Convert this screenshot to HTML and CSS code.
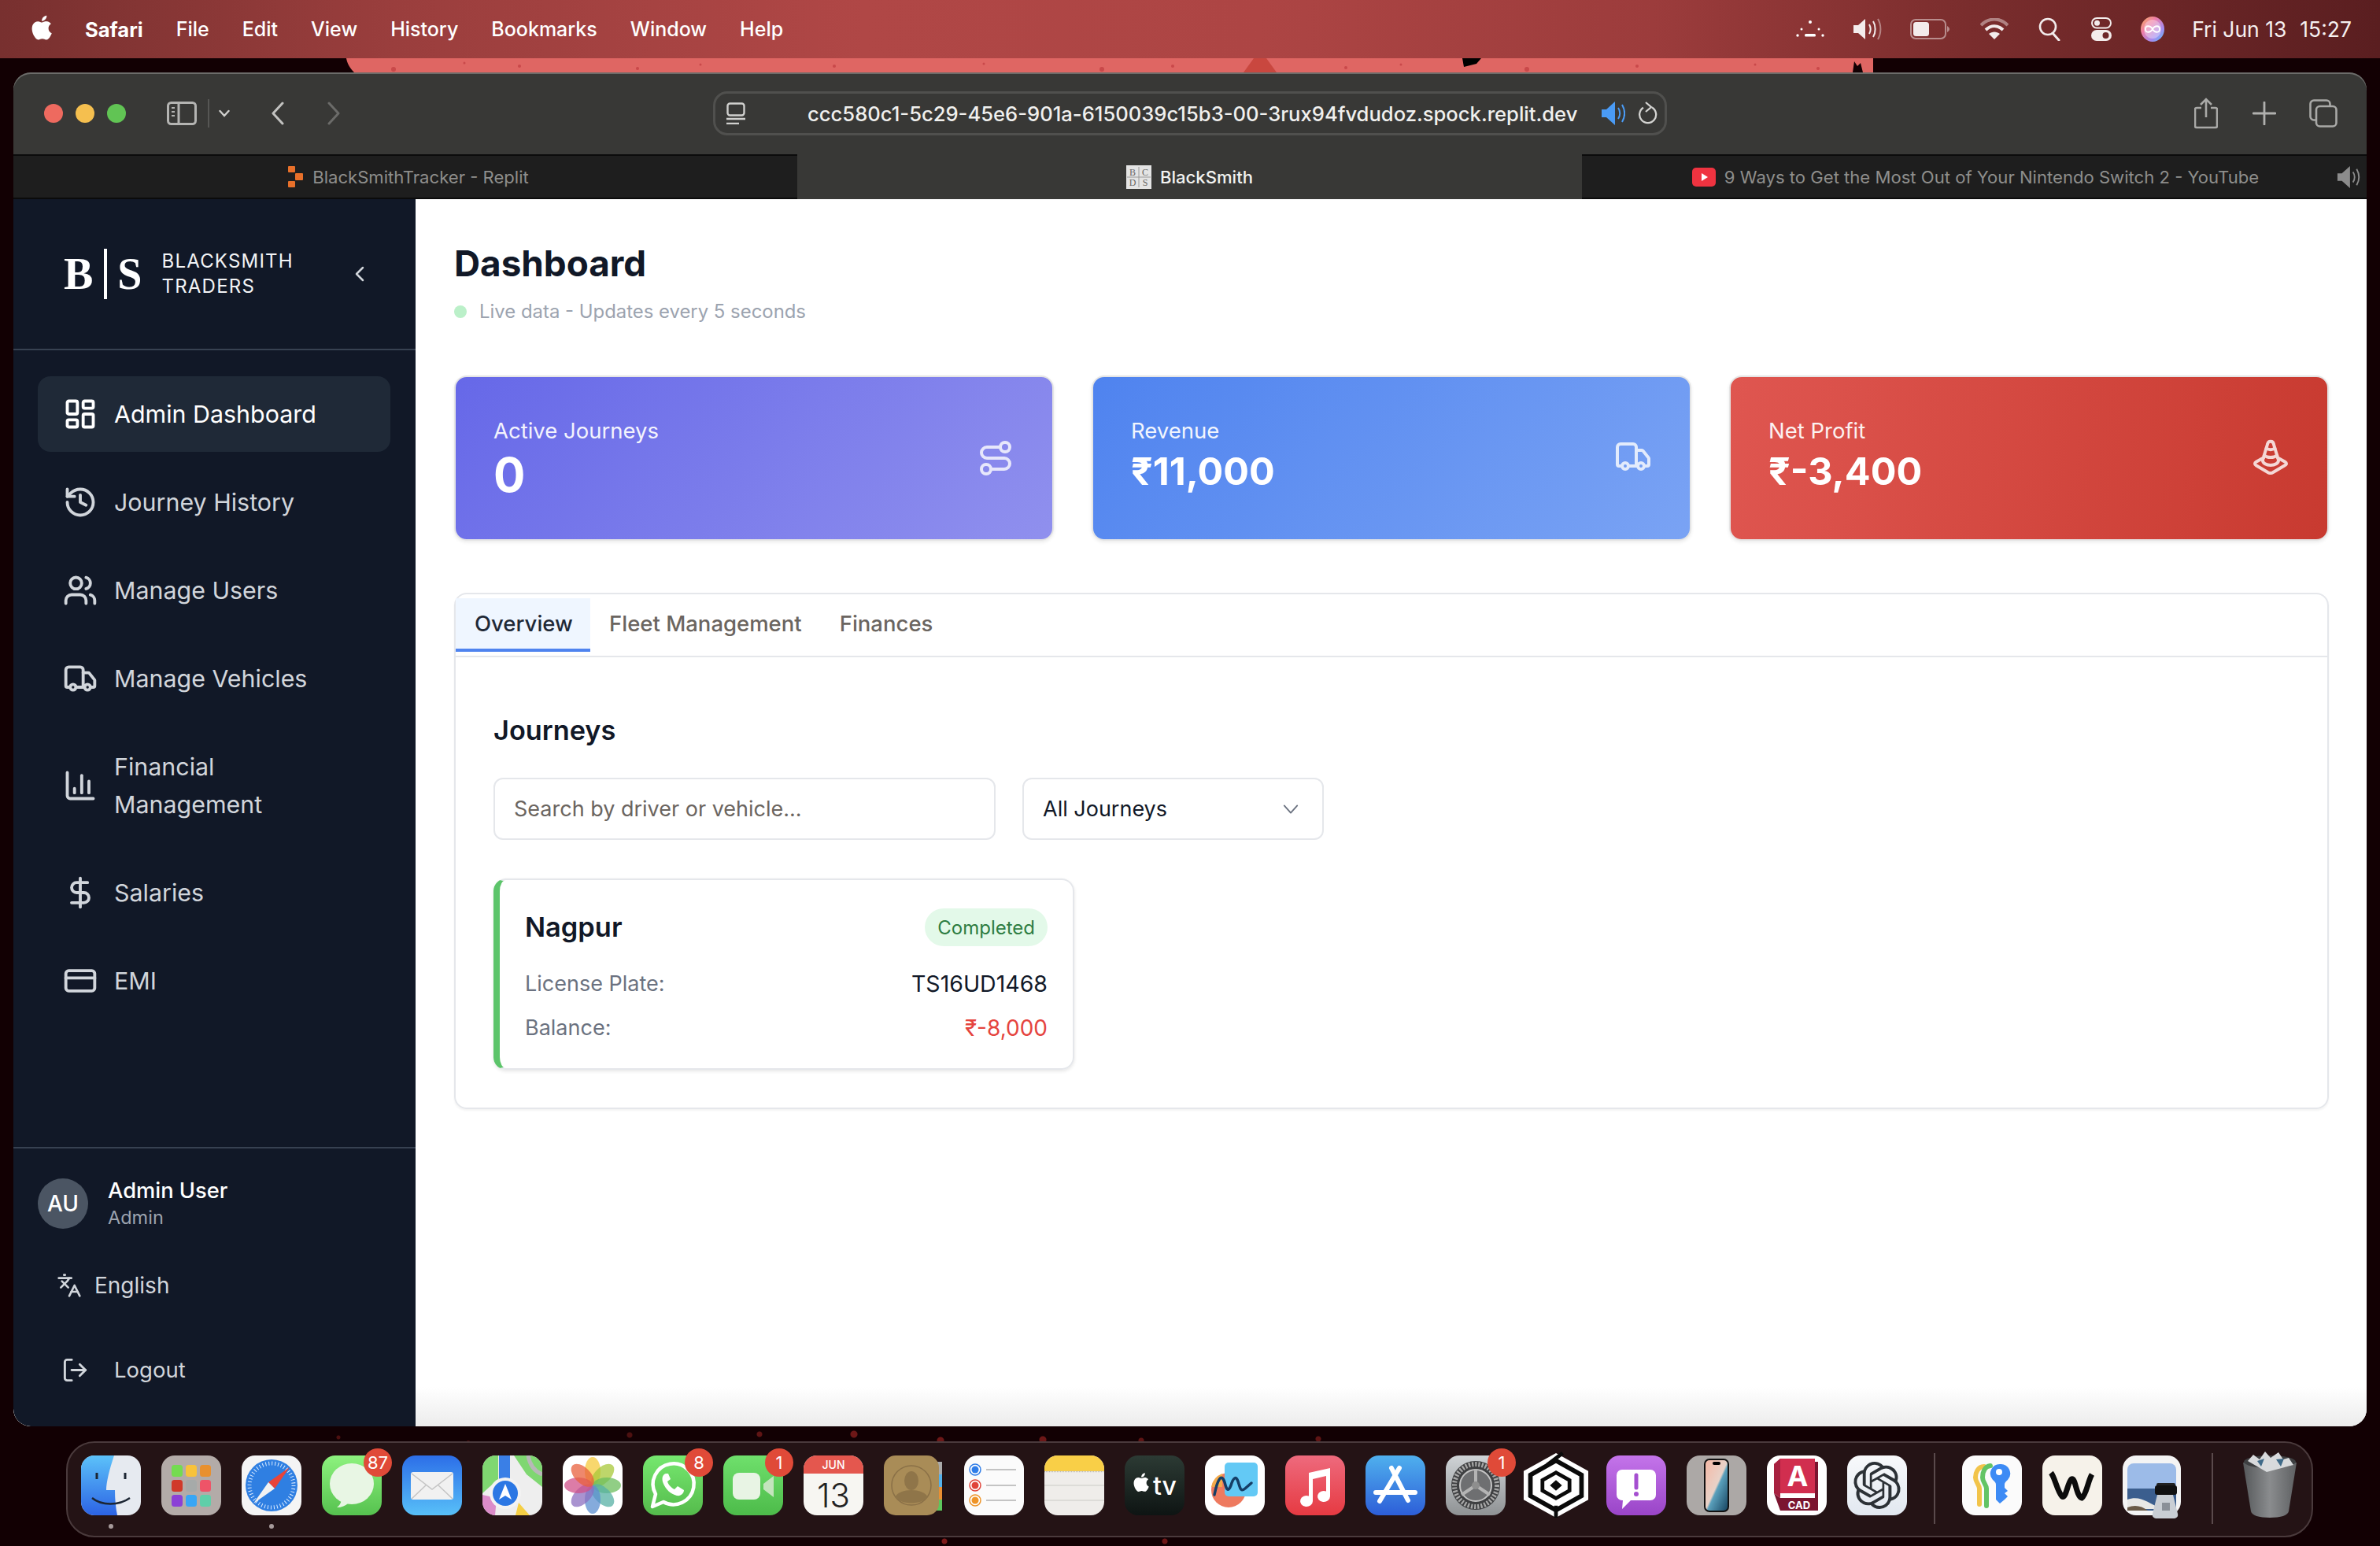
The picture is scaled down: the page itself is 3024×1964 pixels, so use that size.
FILE: index.html
```html
<!DOCTYPE html>
<html lang="en">
<head>
<meta charset="utf-8">
<title>BlackSmith</title>
<link rel="stylesheet" href="styles.css">
</head>
<body>
<div class="desktop">
  <svg class="band" viewBox="0 0 1960 18"><path d="M0 0h1940v18h-1930C4 12 1 6 0 0z" fill="#df6663"/><path d="M1140 18l13-18h16l13 18z" fill="#c9473f"/><path d="M1418 0h24l-6 7-16 4z" fill="#000"/><path d="M1914 18l2-14 4 6 4-4 3 12z" fill="#120003"/><g fill="#c9494a"><circle cx="60" cy="14" r="3"/><circle cx="150" cy="6" r="1.500"/><circle cx="220" cy="10" r="2"/><circle cx="370" cy="13" r="2"/><circle cx="450" cy="8" r="1.500"/><circle cx="620" cy="10" r="2"/><circle cx="810" cy="7" r="1.500"/><circle cx="960" cy="14" r="3"/><circle cx="1050" cy="10" r="2"/><circle cx="1270" cy="12" r="2"/><circle cx="1340" cy="8" r="1.500"/><circle cx="1500" cy="14" r="3"/><circle cx="1640" cy="10" r="2"/><circle cx="1790" cy="8" r="1.500"/><circle cx="1870" cy="13" r="2"/></g></svg>

  <header class="menubar">
    <svg class="apple" viewBox="0 0 24 24"><path d="M17.05 12.04c-.03-2.6 2.12-3.85 2.22-3.91-1.21-1.77-3.09-2.01-3.76-2.04-1.6-.16-3.12.94-3.93.94-.81 0-2.06-.92-3.39-.9-1.74.03-3.35 1.01-4.25 2.57-1.81 3.14-.46 7.8 1.3 10.35.86 1.25 1.89 2.65 3.24 2.6 1.3-.05 1.79-.84 3.36-.84 1.57 0 2.01.84 3.39.81 1.4-.02 2.28-1.27 3.14-2.53.99-1.45 1.4-2.85 1.42-2.93-.03-.01-2.72-1.04-2.74-4.12zM14.46 4.4c.72-.87 1.2-2.08 1.07-3.29-1.03.04-2.28.69-3.02 1.55-.66.77-1.24 2-1.09 3.18 1.15.09 2.32-.58 3.04-1.44z"/></svg>
    <nav class="menu">
      <span class="menu-app">Safari</span><span>File</span><span>Edit</span><span>View</span><span>History</span><span>Bookmarks</span><span>Window</span><span>Help</span>
    </nav>
    <div class="status">
      <svg class="st-dots" viewBox="0 0 36 24"><g fill="#fff"><circle cx="18" cy="3" r="2"/><circle cx="7" cy="12" r="1.500"/><circle cx="29" cy="12" r="1.500"/><circle cx="2" cy="20" r="1.700"/><circle cx="34" cy="20" r="1.700"/><rect x="11" y="18" width="14" height="3.400" rx="1.500"/></g></svg>
      <svg class="st-vol" viewBox="0 0 38 30"><path d="M1 10h6l9-8v26l-9-8H1z" fill="#f3ecec"/><path d="M21 9c2 3.500 2 8.500 0 12M26 5c3.500 5.500 3.500 14.500 0 20" fill="none" stroke="#f3ecec" stroke-width="2"/><path d="M32 2c4.500 7.500 4.500 18.500 0 26" fill="none" stroke="#f3ecec" stroke-opacity=".45" stroke-width="2"/></svg>
      <svg class="st-bat" viewBox="0 0 50 28"><rect x="1" y="2" width="44" height="24" rx="6" fill="none" stroke="#f3ecec" stroke-opacity=".5" stroke-width="2"/><rect x="4" y="5" width="20" height="18" rx="3.500" fill="#f3ecec"/><path d="M47 10c2 1 3 3 3 4s-1 3-3 4z" fill="#f3ecec" fill-opacity=".5"/></svg>
      <svg class="st-wifi" viewBox="0 0 36 28"><path d="M1 9c10-10 24-10 34 0" fill="none" stroke="#f3ecec" stroke-opacity=".45" stroke-width="4"/><path d="M7 15c7-6.500 15-6.500 22 0" fill="none" stroke="#f3ecec" stroke-width="4"/><path d="M18 27l-7-7c4-3.500 10-3.500 14 0z" fill="#f3ecec"/></svg>
      <svg class="st-search" viewBox="0 0 28 30"><circle cx="12" cy="12" r="10" fill="none" stroke="#f3ecec" stroke-width="2.600"/><path d="M18 20l8 9" stroke="#f3ecec" stroke-width="3" stroke-linecap="round"/></svg>
      <svg class="st-ctrl" viewBox="0 0 26 30"><rect x="1" y="1" width="24" height="12.500" rx="6.200" fill="none" stroke="#f3ecec" stroke-width="2"/><circle cx="7.500" cy="7.200" r="3.500" fill="#f3ecec"/><rect x="0" y="16" width="26" height="14" rx="7" fill="#f3ecec"/><circle cx="18.500" cy="23" r="4" fill="#6d2729"/></svg>
      <svg class="st-siri" viewBox="0 0 30 32"><defs><linearGradient id="sg" x1="0" y1="0" x2="1" y2="1"><stop offset="0" stop-color="#f4b35c"/><stop offset=".35" stop-color="#ef7da8"/><stop offset=".7" stop-color="#a68bf0"/><stop offset="1" stop-color="#4fc4f5"/></linearGradient></defs><ellipse cx="15" cy="16" rx="15" ry="16" fill="url(#sg)"/><ellipse cx="15" cy="16" rx="11" ry="12" fill="#fff" fill-opacity=".35"/><path d="M15 16c-3-5-9-5-9 0s6 5 9 0c3-5 9-5 9 0s-6 5-9 0z" fill="none" stroke="#fff" stroke-width="1.800"/></svg>
      <span class="clock"><span>Fri Jun 13</span><span>15:27</span></span>
    </div>
  </header>

  <div class="window">
    <div class="toolbar">
      <div class="lights"><i class="light red"></i><i class="light yellow"></i><i class="light green"></i></div>
      <svg class="tb-side" viewBox="0 0 38 30"><rect x="1.500" y="1.500" width="35" height="27" rx="4" fill="none" stroke="#b4b4b2" stroke-width="3"/><path d="M15 2v26" stroke="#b4b4b2" stroke-width="3"/><path d="M6 8h4M6 13h4M6 18h4" stroke="#b4b4b2" stroke-width="2"/></svg>
      <i class="tb-sep"></i>
      <svg class="tb-chev" viewBox="0 0 14 10"><path d="M1.500 2l5.500 6 5.500-6" fill="none" stroke="#cfcfcd" stroke-width="2.400" stroke-linecap="round"/></svg>
      <svg class="tb-back" viewBox="0 0 18 30"><path d="M15 2L3 15l12 13" fill="none" stroke="#c2c2c0" stroke-width="3" stroke-linecap="round" stroke-linejoin="round"/></svg>
      <svg class="tb-fwd" viewBox="0 0 18 30"><path d="M3 2l12 13L3 28" fill="none" stroke="#6b6b69" stroke-width="3" stroke-linecap="round" stroke-linejoin="round"/></svg>
      <div class="urlbar">
        <svg class="url-reader" viewBox="0 0 24 28"><rect x="1.500" y="1.500" width="21" height="15" rx="3" fill="none" stroke="#d0d0ce" stroke-width="2.400"/><path d="M0 21h24" stroke="#d0d0ce" stroke-width="2.400"/><path d="M0 27h16" stroke="#d0d0ce" stroke-width="2.400"/></svg>
        <span class="url-text">ccc580c1-5c29-45e6-901a-6150039c15b3-00-3rux94fvdudoz.spock.replit.dev</span>
        <svg class="url-vol" viewBox="0 0 30 32"><path d="M0 11h6l11-10v30L6 21H0z" fill="#4a9bf5"/><path d="M21 9c3 4 3 10 0 14M26 5c4 7 4 15 0 22" fill="none" stroke="#4a9bf5" stroke-width="2"/></svg>
        <svg class="url-reload" viewBox="0 0 24 30"><path d="M17 7.500A10.500 10.500 0 1 1 6 7.700" fill="none" stroke="#d4d4d2" stroke-width="2.300"/><path d="M9 1l7 6-7 6" fill="none" stroke="#d4d4d2" stroke-width="2.300"/></svg>
      </div>
      <svg class="tb-share" viewBox="0 0 30 40"><path d="M9 13H3a2 2 0 0 0-2 2v21a2 2 0 0 0 2 2h24a2 2 0 0 0 2-2V15a2 2 0 0 0-2-2h-6" fill="none" stroke="#a9a9a7" stroke-width="2.600"/><path d="M15 25V2M8 9l7-7 7 7" fill="none" stroke="#a9a9a7" stroke-width="2.600"/></svg>
      <svg class="tb-plus" viewBox="0 0 30 30"><path d="M15 1v28M1 15h28" stroke="#b0b0ae" stroke-width="2.800" stroke-linecap="round"/></svg>
      <svg class="tb-tabs" viewBox="0 0 36 36"><rect x="1.500" y="1.500" width="25" height="25" rx="4.500" fill="none" stroke="#a9a9a7" stroke-width="2.600"/><rect x="9" y="9" width="25.500" height="25.500" rx="4.500" fill="#383836" stroke="#a9a9a7" stroke-width="2.600"/></svg>
    </div>

    <div class="tabbar">
      <div class="tab tab-first">
        <svg class="fav" viewBox="0 0 20 28"><g fill="#e8702a"><rect x="0" y="0" width="9" height="8" rx="1"/><rect x="9" y="9" width="10" height="9" rx="1"/><rect x="0" y="19" width="9" height="8" rx="1"/></g></svg>
        <span>BlackSmithTracker - Replit</span>
      </div>
      <div class="tab tab-active">
        <svg class="fav-bs" viewBox="0 0 32 30"><rect width="32" height="30" fill="#e4e4e4"/><path d="M16 2v26M1 15h30" stroke="#9a9a9a" stroke-width="1"/><text x="8" y="13" class="fav-txt">B</text><text x="24" y="13" class="fav-txt">C</text><text x="8" y="26" class="fav-txt">D</text><text x="24" y="26" class="fav-txt">S</text></svg>
        <span>BlackSmith</span>
      </div>
      <div class="tab tab-last">
        <svg class="fav-yt" viewBox="0 0 30 24"><rect width="30" height="24" rx="5" fill="#ef3340"/><path d="M12 7l8 5-8 5z" fill="#fff"/></svg>
        <span>9 Ways to Get the Most Out of Your Nintendo Switch 2 - YouTube</span>
        <svg class="tab-vol" viewBox="0 0 30 32"><path d="M0 11h6l11-10v30L6 21H0z" fill="#8c8c8c"/><path d="M21 9c3 4 3 10 0 14M26 5c4 7 4 15 0 22" fill="none" stroke="#8c8c8c" stroke-width="2"/></svg>
      </div>
    </div>

    <div class="page">
      <aside class="sidebar">
        <div class="brand">
          <div class="brand-mark"><span>B</span><i></i><span>S</span></div>
          <div class="brand-name">BLACKSMITH<br>TRADERS</div>
          <svg class="brand-chev" viewBox="0 0 24 24"><path d="M15 4l-8 8 8 8"/></svg>
        </div>
        <nav class="nav">
          <a class="nav-item active"><svg class="ico" viewBox="0 0 24 24"><rect x="3" y="3" width="7" height="9" rx="1"/><rect x="14" y="3" width="7" height="5" rx="1"/><rect x="14" y="12" width="7" height="9" rx="1"/><rect x="3" y="16" width="7" height="5" rx="1"/></svg><span>Admin Dashboard</span></a>
          <a class="nav-item"><svg class="ico" viewBox="0 0 24 24"><path d="M3 12a9 9 0 1 0 9-9 9.750 9.750 0 0 0-6.740 2.740L3 8"/><path d="M3 3v5h5"/><path d="M12 7v5l4 2"/></svg><span>Journey History</span></a>
          <a class="nav-item"><svg class="ico" viewBox="0 0 24 24"><path d="M16 21v-2a4 4 0 0 0-4-4H6a4 4 0 0 0-4 4v2"/><circle cx="9" cy="7" r="4"/><path d="M22 21v-2a4 4 0 0 0-3-3.870"/><path d="M16 3.130a4 4 0 0 1 0 7.750"/></svg><span>Manage Users</span></a>
          <a class="nav-item"><svg class="ico" viewBox="0 0 24 24"><path d="M14 18V6a2 2 0 0 0-2-2H4a2 2 0 0 0-2 2v11a1 1 0 0 0 1 1h2"/><path d="M15 18H9"/><path d="M19 18h2a1 1 0 0 0 1-1v-3.650a1 1 0 0 0-.220-.624l-3.480-4.350A1 1 0 0 0 17.520 8H14"/><circle cx="17" cy="18" r="2"/><circle cx="7" cy="18" r="2"/></svg><span>Manage Vehicles</span></a>
          <a class="nav-item"><svg class="ico" viewBox="0 0 24 24"><path d="M3 3v16a2 2 0 0 0 2 2h16"/><path d="M18 17V9"/><path d="M13 17V5"/><path d="M8 17v-3"/></svg><span>Financial<br>Management</span></a>
          <a class="nav-item"><svg class="ico" viewBox="0 0 24 24"><path d="M12 2v20"/><path d="M17 5H9.500a3.500 3.500 0 0 0 0 7h5a3.500 3.500 0 0 1 0 7H6"/></svg><span>Salaries</span></a>
          <a class="nav-item"><svg class="ico" viewBox="0 0 24 24"><rect x="2" y="5" width="20" height="14" rx="2"/><path d="M2 10h20"/></svg><span>EMI</span></a>
        </nav>
        <div class="side-foot">
          <div class="user">
            <div class="avatar">AU</div>
            <div class="user-text"><div class="user-name">Admin User</div><div class="user-role">Admin</div></div>
          </div>
          <div class="lang"><svg class="ico-lang" viewBox="0 0 24 24"><path d="m5 8 6 6"/><path d="m4 14 6-6 2-3"/><path d="M2 5h12"/><path d="M7 2h1"/><path d="m22 22-5-10-5 10"/><path d="M14 18h6"/></svg><span>English</span></div>
          <div class="logout"><svg class="ico-out" viewBox="0 0 24 24"><path d="M9 21H5a2 2 0 0 1-2-2V5a2 2 0 0 1 2-2h4"/><path d="m16 17 5-5-5-5"/><path d="M21 12H9"/></svg><span>Logout</span></div>
        </div>
      </aside>

      <main class="main">
        <h1 class="title">Dashboard</h1>
        <div class="live"><i class="live-dot"></i><span>Live data - Updates every 5 seconds</span></div>

        <section class="stats">
          <article class="stat stat-purple">
            <div><div class="stat-label">Active Journeys</div><div class="stat-value stat-value-big">0</div></div>
            <svg class="stat-ico" viewBox="0 0 24 24"><circle cx="6" cy="19" r="3"/><path d="M9 19h8.500a3.500 3.500 0 0 0 0-7h-11a3.500 3.500 0 0 1 0-7H15"/><circle cx="18" cy="5" r="3"/></svg>
          </article>
          <article class="stat stat-blue">
            <div><div class="stat-label">Revenue</div><div class="stat-value">₹11,000</div></div>
            <svg class="stat-ico" viewBox="0 0 24 24"><path d="M14 18V6a2 2 0 0 0-2-2H4a2 2 0 0 0-2 2v11a1 1 0 0 0 1 1h2"/><path d="M15 18H9"/><path d="M19 18h2a1 1 0 0 0 1-1v-3.650a1 1 0 0 0-.220-.624l-3.480-4.350A1 1 0 0 0 17.520 8H14"/><circle cx="17" cy="18" r="2"/><circle cx="7" cy="18" r="2"/></svg>
          </article>
          <article class="stat stat-red">
            <div><div class="stat-label">Net Profit</div><div class="stat-value">₹-3,400</div></div>
            <svg class="stat-ico" viewBox="0 0 24 24"><path d="M9.300 6.200a4.550 4.550 0 0 0 5.400 0"/><path d="M7.900 10.700c.9.800 2.400 1.300 4.100 1.300s3.200-.5 4.100-1.300"/><path d="M13.900 3.500a1.930 1.930 0 0 0-3.800-.1l-3 10c-.1.200-.1.400-.1.600 0 1.700 2.200 3 5 3s5-1.300 5-3c0-.2 0-.4-.1-.5Z"/><path d="m7.500 12.200-4.700 2.700c-.5.300-.8.700-.8 1.100s.3.800.8 1.100l7.600 4.500c.9.500 2.100.5 3 0l7.600-4.500c.7-.3 1-.7 1-1.100s-.3-.8-.8-1.100l-4.700-2.700"/></svg>
          </article>
        </section>

        <section class="panel">
          <div class="tablist">
            <div class="tl-item tl-active">Overview</div>
            <div class="tl-item">Fleet Management</div>
            <div class="tl-item">Finances</div>
          </div>
          <div class="panel-body">
            <h2 class="section-title">Journeys</h2>
            <div class="filters">
              <input class="search" type="text" placeholder="Search by driver or vehicle...">
              <div class="select"><span>All Journeys</span><svg viewBox="0 0 24 24"><path d="M3 7l9 10 9-10"/></svg></div>
            </div>
            <article class="jcard">
              <div class="jcard-head"><h3>Nagpur</h3><span class="badge">Completed</span></div>
              <div class="jrow"><span class="jkey">License Plate:</span><span class="jval">TS16UD1468</span></div>
              <div class="jrow"><span class="jkey">Balance:</span><span class="jval jneg">₹-8,000</span></div>
            </article>
          </div>
        </section>
      </main>
    </div>
  </div>

  <footer class="dock">
    <div class="app run"><svg viewBox="0 0 76 76"><defs><linearGradient id="f1" x1="0" y1="0" x2="0" y2="1"><stop offset="0" stop-color="#5cc2fa"/><stop offset="1" stop-color="#2c63e4"/></linearGradient></defs><rect width="76" height="76" rx="17" fill="#e6eaf0"/><path d="M17 0h25C36 18 32 34 32 44h11c0 12 1 22 3 32H17A17 17 0 0 1 0 59V17A17 17 0 0 1 17 0z" fill="url(#f1)"/><path d="M20 22v8M56 22v8" stroke="#1c2633" stroke-width="3"/><path d="M14 54c12 10 34 10 48 0" fill="none" stroke="#1c2633" stroke-width="2.500"/></svg></div>
    <div class="app"><svg viewBox="0 0 76 76"><rect width="76" height="76" rx="17" fill="#b3aba8"/><g><rect x="13" y="12" width="14" height="15" rx="3.500" fill="#74dc50"/><rect x="31" y="12" width="14" height="15" rx="3.500" fill="#f8c23b"/><rect x="49" y="12" width="14" height="15" rx="3.500" fill="#e8902f"/><rect x="13" y="31" width="14" height="15" rx="3.500" fill="#d0392a"/><rect x="31" y="31" width="14" height="15" rx="3.500" fill="#a6aaa9"/><rect x="49" y="31" width="14" height="15" rx="3.500" fill="#ee5468"/><rect x="13" y="50" width="14" height="15" rx="3.500" fill="#8b40d6"/><rect x="31" y="50" width="14" height="15" rx="3.500" fill="#38a6f5"/><rect x="49" y="50" width="14" height="15" rx="3.500" fill="#5fcfa9"/></g></svg></div>
    <div class="app run"><svg viewBox="0 0 76 76"><rect width="76" height="76" rx="17" fill="#f4f4f4"/><circle cx="38" cy="38" r="33" fill="#2f7fe2"/><circle cx="38" cy="38" r="28" fill="none" stroke="#dcecff" stroke-width="5" stroke-dasharray="1 3"/><path d="M61 15L34 34l8 8z" fill="#e8443a"/><path d="M15 61l19-27 8 8z" fill="#f2f2f2"/></svg></div>
    <div class="app"><svg viewBox="0 0 76 76"><defs><linearGradient id="m1" x1="0" y1="0" x2="0" y2="1"><stop offset="0" stop-color="#8df27e"/><stop offset="1" stop-color="#56c24f"/></linearGradient></defs><rect width="76" height="76" rx="17" fill="url(#m1)"/><ellipse cx="38" cy="36" rx="28" ry="26" fill="#e8f6e4"/><path d="M25 56c-1 5-3 8-6 10 6 0 11-2 15-6z" fill="#e8f6e4"/></svg><b class="badge-dock">87</b></div>
    <div class="app"><svg viewBox="0 0 76 76"><defs><linearGradient id="ma" x1="0" y1="0" x2="0" y2="1"><stop offset="0" stop-color="#2c6ee8"/><stop offset="1" stop-color="#58c0f8"/></linearGradient></defs><rect width="76" height="76" rx="17" fill="url(#ma)"/><rect x="11" y="21" width="54" height="35" rx="3" fill="#f1f1f1"/><path d="M12 23l26 20 26-20M12 55l19-18M64 55L45 37" fill="none" stroke="#c4c4c4" stroke-width="1.500"/></svg></div>
    <div class="app"><svg viewBox="0 0 76 76"><clipPath id="mc"><rect width="76" height="76" rx="17"/></clipPath><g clip-path="url(#mc)"><rect width="76" height="76" fill="#eeeeee"/><path d="M0 0h20v30L0 48z" fill="#7fd771"/><path d="M40 0h36v40L56 24z" fill="#7fd771"/><path d="M0 50l18 4-2 22H0z" fill="#db8cc9"/><path d="M42 76l4-16 14 16z" fill="#f5cf45"/><path d="M17 0h14v40H17z" fill="#3a7fe6" transform="translate(4 0)"/><path d="M58 0c2 12 8 20 18 24" fill="none" stroke="#b8b8b8" stroke-width="5"/><circle cx="29" cy="48" r="20" fill="#f3f3f3"/><circle cx="29" cy="48" r="16" fill="#2b77e4"/><path d="M29 36l8 20-8-5-8 5z" fill="#fff"/></g></svg></div>
    <div class="app"><svg viewBox="0 0 76 76"><rect width="76" height="76" rx="17" fill="#fff"/><g transform="translate(38 38)" fill-opacity=".75"><ellipse cy="-18" rx="10" ry="18" fill="#f5c93c"/><ellipse cy="-18" rx="10" ry="18" fill="#a8c83a" transform="rotate(45)"/><ellipse cy="-18" rx="10" ry="18" fill="#6cbd5c" transform="rotate(90)"/><ellipse cy="-18" rx="10" ry="18" fill="#57b0a4" transform="rotate(135)"/><ellipse cy="-18" rx="10" ry="18" fill="#5c8fd0" transform="rotate(180)"/><ellipse cy="-18" rx="10" ry="18" fill="#8c6fc0" transform="rotate(225)"/><ellipse cy="-18" rx="10" ry="18" fill="#d0508a" transform="rotate(270)"/><ellipse cy="-18" rx="10" ry="18" fill="#e8603c" transform="rotate(315)"/></g></svg></div>
    <div class="app"><svg viewBox="0 0 76 76"><defs><linearGradient id="w1" x1="0" y1="0" x2="0" y2="1"><stop offset="0" stop-color="#76e86f"/><stop offset="1" stop-color="#55bb4c"/></linearGradient></defs><rect width="76" height="76" rx="17" fill="url(#w1)"/><path d="M12 65l4-16a26 26 0 1 1 10 10z" fill="none" stroke="#fff" stroke-width="4.500" stroke-linejoin="round"/><path d="M29 23c-4 1-6 6-3 13 3 7 9 13 17 15 5 1 9-3 9-7l-8-5-4 4c-4-2-8-6-9-10l4-3-3-7z" fill="#fff"/></svg><b class="badge-dock">8</b></div>
    <div class="app"><svg viewBox="0 0 76 76"><defs><linearGradient id="ft" x1="0" y1="0" x2="0" y2="1"><stop offset="0" stop-color="#6fe06c"/><stop offset="1" stop-color="#4dbb4a"/></linearGradient></defs><rect width="76" height="76" rx="17" fill="url(#ft)"/><rect x="12" y="22" width="35" height="34" rx="8" fill="#e8f4e4"/><path d="M51 36l13-10v27L51 43z" fill="#c4e4bd"/></svg><b class="badge-dock">1</b></div>
    <div class="app"><svg viewBox="0 0 76 76"><clipPath id="cc"><rect width="76" height="76" rx="17"/></clipPath><g clip-path="url(#cc)"><rect width="76" height="76" fill="#f7f6f2"/><rect width="76" height="23" fill="#e4574e"/><text x="38" y="17" class="cal-m">JUN</text><text x="38" y="66" class="cal-d">13</text></g></svg></div>
    <div class="app"><svg viewBox="0 0 76 76"><rect x="60" y="8" width="14" height="16" fill="#aaa" /><rect x="60" y="24" width="14" height="16" fill="#54b1ea"/><rect x="60" y="40" width="14" height="16" fill="#ea8f32"/><rect x="60" y="56" width="14" height="14" fill="#5ec65c"/><rect width="70" height="76" rx="15" fill="#a98c57"/><circle cx="35" cy="38" r="25" fill="none" stroke="#8a7047" stroke-width="1.500"/><ellipse cx="35" cy="32" rx="9" ry="12" fill="#8f7549"/><path d="M14 53c6-12 36-12 42 0-10 10-32 10-42 0z" fill="#8f7549"/></svg></div>
    <div class="app"><svg viewBox="0 0 76 76"><rect width="76" height="76" rx="17" fill="#fbfbfb"/><circle cx="14" cy="18" r="7" fill="#fff" stroke="#2f7de8" stroke-width="1.500"/><circle cx="14" cy="18" r="4.500" fill="#2f7de8"/><circle cx="14" cy="38" r="7" fill="#fff" stroke="#e0443a" stroke-width="1.500"/><circle cx="14" cy="38" r="4.500" fill="#e0443a"/><circle cx="14" cy="57" r="7" fill="#fff" stroke="#ee9428" stroke-width="1.500"/><circle cx="14" cy="57" r="4.500" fill="#ee9428"/><path d="M28 18h38M28 38h38M28 57h38" stroke="#c4c4c4" stroke-width="2"/></svg></div>
    <div class="app"><svg viewBox="0 0 76 76"><clipPath id="nc"><rect width="76" height="76" rx="17"/></clipPath><g clip-path="url(#nc)"><rect width="76" height="76" fill="#efedea"/><rect width="76" height="20" fill="#f9cf47"/><path d="M0 20.500h76" stroke="#bbb" stroke-width="1.500" stroke-dasharray="1 1"/><path d="M0 38h76M0 57h76" stroke="#d8d6d2" stroke-width="1.500"/></g></svg></div>
    <div class="app"><svg viewBox="0 0 76 76"><defs><linearGradient id="tv" x1="0" y1="0" x2="0" y2="1"><stop offset="0" stop-color="#2c3a34"/><stop offset="1" stop-color="#0e1413"/></linearGradient></defs><rect width="76" height="76" rx="17" fill="url(#tv)"/><g transform="translate(8 21) scale(1.150)"><path fill="#fff" d="M17.050 12.040c-.03-2.600 2.120-3.850 2.220-3.910-1.210-1.770-3.090-2.010-3.760-2.040-1.600-.16-3.120.94-3.930.94-.81 0-2.060-.92-3.390-.9-1.740.03-3.350 1.010-4.250 2.570-1.810 3.140-.46 7.800 1.300 10.350.86 1.250 1.890 2.650 3.240 2.600 1.300-.05 1.790-.84 3.360-.84 1.570 0 2.010.84 3.390.81 1.400-.02 2.280-1.270 3.140-2.530.99-1.450 1.400-2.850 1.420-2.930-.03-.01-2.720-1.040-2.740-4.120zM14.460 4.400c.72-.87 1.200-2.080 1.070-3.290-1.030.04-2.280.69-3.020 1.550-.66.77-1.240 2-1.090 3.180 1.150.09 2.320-.58 3.040-1.440z"/></g><text x="51" y="50" class="tv-t">tv</text></svg></div>
    <div class="app"><svg viewBox="0 0 76 76"><rect width="76" height="76" rx="17" fill="#fff"/><circle cx="30" cy="44" r="22" fill="#ee7a5f"/><path d="M8 40a22 22 0 0 1 14-17v17z" fill="#f3a94a"/><rect x="25" y="9" width="42" height="43" rx="5" fill="#63c9f5"/><path d="M12 50c4-20 9-28 13-16 2 8 4 14 8 4 3-10 7-14 10-2 2 7 3 10 8 6l8-7" fill="none" stroke="#153e66" stroke-width="3.500" stroke-linecap="round"/></svg></div>
    <div class="app"><svg viewBox="0 0 76 76"><defs><linearGradient id="mu" x1="0" y1="0" x2="0" y2="1"><stop offset="0" stop-color="#ee6a7d"/><stop offset="1" stop-color="#e63a42"/></linearGradient></defs><rect width="76" height="76" rx="17" fill="url(#mu)"/><path d="M30 22l27-6v36a8 7 0 1 1-5-6.500V26l-17 4v28a8 7 0 1 1-5-6.500z" fill="#fff"/></svg></div>
    <div class="app"><svg viewBox="0 0 76 76"><defs><linearGradient id="as" x1="0" y1="0" x2="0" y2="1"><stop offset="0" stop-color="#4fb0ee"/><stop offset="1" stop-color="#2d5ed8"/></linearGradient></defs><rect width="76" height="76" rx="17" fill="url(#as)"/><g stroke="#fff" stroke-width="6" stroke-linecap="round" fill="none"><path d="M33 16l21 41"/><path d="M43 16L18 58"/><path d="M13 47h50"/></g></svg></div>
    <div class="app"><svg viewBox="0 0 76 76"><defs><linearGradient id="ss" x1="0" y1="0" x2="0" y2="1"><stop offset="0" stop-color="#cfd3d6"/><stop offset="1" stop-color="#8f9294"/></linearGradient></defs><rect width="76" height="76" rx="17" fill="url(#ss)"/><circle cx="38" cy="38" r="31" fill="#3f4042"/><circle cx="38" cy="38" r="27" fill="none" stroke="#a8a8a8" stroke-width="6" stroke-dasharray="2.200 2"/><circle cx="38" cy="38" r="20" fill="#6e6f71" stroke="#c4c4c4" stroke-width="2"/><path d="M38 38V17M38 38L20 50M38 38l18 12" stroke="#b4b4b4" stroke-width="4"/><circle cx="38" cy="38" r="5" fill="#8e8e8e"/></svg><b class="badge-dock">1</b></div>
    <div class="app"><svg viewBox="0 0 92 88" class="app-wide"><path d="M46 1l43 24v38L46 87 3 63V25z" fill="#fff"/><path d="M46 11L12 30v28l34 19 34-19V30z" fill="none" stroke="#0a0a0a" stroke-width="6"/><path d="M46 27L28 37v14l18 10 18-10V37z" fill="none" stroke="#0a0a0a" stroke-width="5"/><path d="M46 37l-8 7 8 7 8-7z" fill="#0a0a0a"/><path d="M55 1L34 17M46 87V71" stroke="#0a0a0a" stroke-width="5"/></svg></div>
    <div class="app"><svg viewBox="0 0 76 76"><defs><linearGradient id="fb" x1="0" y1="0" x2="0" y2="1"><stop offset="0" stop-color="#c474ea"/><stop offset="1" stop-color="#9a45c8"/></linearGradient></defs><rect width="76" height="76" rx="17" fill="url(#fb)"/><path d="M20 18h36a7 7 0 0 1 7 7v25a7 7 0 0 1-7 7H31L20 68l1-11a7 7 0 0 1-8-7V25a7 7 0 0 1 7-7z" fill="#fff"/><path d="M38 25v16" stroke="#a54fd0" stroke-width="5" stroke-linecap="round"/><circle cx="38" cy="49" r="3" fill="#a54fd0"/></svg></div>
    <div class="app"><svg viewBox="0 0 76 76"><defs><linearGradient id="ip" x1="0" y1="0" x2="1" y2="1"><stop offset="0" stop-color="#f6b7a4"/><stop offset=".5" stop-color="#e8d2c8"/><stop offset=".55" stop-color="#5aa0bc"/><stop offset="1" stop-color="#14405c"/></linearGradient></defs><rect width="76" height="76" rx="17" fill="#aca8a6"/><rect x="23" y="5" width="30" height="66" rx="6" fill="url(#ip)" stroke="#111" stroke-width="2"/><rect x="33" y="8" width="10" height="4" rx="2" fill="#000"/></svg></div>
    <div class="app"><svg viewBox="0 0 76 76"><rect width="76" height="76" rx="17" fill="#fff"/><path d="M9 11l8-7h44v44H9z" fill="#d12e4f"/><path d="M61 8h4v46h-4z" fill="#7b1530"/><path d="M9 48l8 6h48v16H17z" fill="#7b1530"/><path d="M9 11v37l8 6V4z" fill="#a82140"/><text x="39" y="39" class="cad-a">A</text><text x="41" y="68" class="cad-t">CAD</text></svg></div>
    <div class="app"><svg viewBox="0 0 76 76"><defs><linearGradient id="gp" x1="0" y1="0" x2="0" y2="1"><stop offset="0" stop-color="#f8f9fb"/><stop offset="1" stop-color="#e2e8f0"/></linearGradient></defs><rect width="76" height="76" rx="17" fill="url(#gp)"/><g transform="translate(8 8) scale(2.500)"><path fill="#2c3136" d="M22.2819 9.8211a5.9847 5.9847 0 0 0-.5157-4.9108 6.0462 6.0462 0 0 0-6.5098-2.9A6.0651 6.0651 0 0 0 4.9807 4.1818a5.9847 5.9847 0 0 0-3.9977 2.9 6.0462 6.0462 0 0 0 .7427 7.0966 5.98 5.98 0 0 0 .511 4.9107 6.051 6.051 0 0 0 6.5146 2.9001A5.9847 5.9847 0 0 0 13.2599 24a6.0557 6.0557 0 0 0 5.7718-4.2058 5.9894 5.9894 0 0 0 3.9977-2.9001 6.0557 6.0557 0 0 0-.7475-7.0729zm-9.022 12.6081a4.4755 4.4755 0 0 1-2.8764-1.0408l.1419-.0804 4.7783-2.7582a.7948.7948 0 0 0 .3927-.6813v-6.7369l2.02 1.1686a.071.071 0 0 1 .038.052v5.5826a4.504 4.504 0 0 1-4.4945 4.4944zm-9.6607-4.1254a4.4708 4.4708 0 0 1-.5346-3.0137l.142.0852 4.783 2.7582a.7712.7712 0 0 0 .7806 0l5.8428-3.3685v2.3324a.0804.0804 0 0 1-.0332.0615L9.74 19.9502a4.4992 4.4992 0 0 1-6.1408-1.6464zM2.3408 7.8956a4.485 4.485 0 0 1 2.3655-1.9728V11.6a.7664.7664 0 0 0 .3879.6765l5.8144 3.3543-2.0201 1.1685a.0757.0757 0 0 1-.071 0l-4.8303-2.7865A4.504 4.504 0 0 1 2.3408 7.872zm16.5963 3.8558L13.1038 8.364 15.1192 7.2a.0757.0757 0 0 1 .071 0l4.8303 2.7913a4.4944 4.4944 0 0 1-.6765 8.1042v-5.6772a.79.79 0 0 0-.407-.667zm2.0107-3.0231l-.142-.0852-4.7735-2.7818a.7759.7759 0 0 0-.7854 0L9.409 9.2297V6.8974a.0662.0662 0 0 1 .0284-.0615l4.8303-2.7866a4.4992 4.4992 0 0 1 6.6802 4.66zM8.3065 12.863l-2.02-1.1638a.0804.0804 0 0 1-.038-.0567V6.0742a4.4992 4.4992 0 0 1 7.3757-3.4537l-.142.0805L8.704 5.459a.7948.7948 0 0 0-.3927.6813zm1.0976-2.3654l2.602-1.4998 2.6069 1.4998v2.9994l-2.5974 1.4997-2.6067-1.4997Z"/></g></svg></div>
    <i class="dock-sep dock-sep-a"></i>
    <div class="app"><svg viewBox="0 0 76 76"><rect width="76" height="76" rx="17" fill="#fbfbfb"/><g fill="none" stroke-linecap="round"><path d="M28 14c-8 0-11 8-11 14s5 9 5 14v20" stroke="#f2c44a" stroke-width="6"/><path d="M36 13c-8 1-10 9-10 15 0 6 5 9 5 14v22" stroke="#63c465" stroke-width="6"/></g><path d="M48 11a12 12 0 0 1 10 20c-2 2-4 3-4 6v4l4 4-4 3 4 4-4 4-6 5-5-5V37c0-3-2-4-4-6a12 12 0 0 1 9-20z" fill="#3d8bf5"/><circle cx="47" cy="21" r="4" fill="#fff"/></svg></div>
    <div class="app"><svg viewBox="0 0 76 76"><rect width="76" height="76" rx="16" fill="#f6f2ea"/><path d="M11 22c5 6 8 24 14 30 5 4 7-18 12-22 5-3 6 22 13 24 6-4 8-22 13-30" fill="none" stroke="#0c0c0c" stroke-width="7"/></svg></div>
    <div class="app"><svg viewBox="0 0 76 80" class="app-tall"><rect width="74" height="76" rx="17" fill="#f4f4f4"/><rect x="6" y="10" width="62" height="60" rx="8" fill="#9cbbe8"/><rect x="6" y="42" width="62" height="28" fill="#3b5e8e"/><path d="M6 56c16-6 26 4 44 12H6z" fill="#e8e8e6"/><path d="M6 66c10-4 18-2 26 4H6z" fill="#6a5a48"/><path d="M44 50l-6 24c-1 4 2 6 6 6h20c4 0 7-2 6-6l-6-24z" fill="#c9ced4"/><rect x="43" y="35" width="24" height="5" rx="2" fill="#222"/><rect x="41" y="38" width="28" height="12" rx="3" fill="#111"/><rect x="50" y="60" width="10" height="10" fill="#8a9098"/></svg></div>
    <i class="dock-sep dock-sep-b"></i>
    <div class="app app-trash"><svg viewBox="0 0 68 86"><defs><linearGradient id="tr" x1="0" y1="0" x2="1" y2="0"><stop offset="0" stop-color="#55585a"/><stop offset=".5" stop-color="#8a8c8e"/><stop offset="1" stop-color="#5e6062"/></linearGradient></defs><path d="M0 16h68L58 78c-1 5-10 8-24 8S11 83 10 78z" fill="url(#tr)"/><ellipse cx="34" cy="15" rx="33" ry="8" fill="#3d3f41"/><path d="M6 14L13 6l8 6 7-10 7 8 10-7 6 9 7-2 6 9-34 9z" fill="#d8dadc"/><path d="M18 14l5 7 4-10zM42 12l6 9 4-10z" fill="#3f6a88"/></svg></div>
  </footer>
</div>
</body>
</html>
```

FILE: styles.css
```css
* { box-sizing: border-box; }
html, body { margin: 0; padding: 0; }
body { width: 3024px; height: 1964px; overflow: hidden; font-family: Inter, "Noto Sans", sans-serif; }

.desktop {
  position: relative;
  width: 3024px;
  height: 1964px;
  display: flex;
  flex-direction: column;
  background-color: #120003;
  background-image:
    radial-gradient(circle at 595px 1836px, #7d1b1b 0 5px, transparent 6px),
    radial-gradient(circle at 430px 1826px, #4d1010 0 2px, transparent 3px),
    radial-gradient(circle at 800px 1823px, #4d1010 0 3px, transparent 4px),
    radial-gradient(circle at 965px 1822px, #5f1414 0 3px, transparent 4px),
    radial-gradient(circle at 1085px 1822px, #6d1717 0 4px, transparent 5px),
    radial-gradient(circle at 1195px 1830px, #6d1717 0 4px, transparent 5px),
    radial-gradient(circle at 1325px 1829px, #6d1717 0 4px, transparent 5px),
    radial-gradient(circle at 1450px 1830px, #5f1414 0 3px, transparent 4px),
    radial-gradient(circle at 1675px 1828px, #5f1414 0 3px, transparent 4px),
    radial-gradient(circle at 1200px 1958px, #7d1b1b 0 3px, transparent 4px),
    radial-gradient(circle at 1480px 1958px, #6d1717 0 3px, transparent 4px);
}

.band {
  position: absolute;
  left: 440px;
  top: 74px;
  width: 1960px;
  height: 18px;
}

/* menu bar */
.menubar {
  position: relative;
  height: 74px;
  flex: none;
  display: flex;
  align-items: center;
  padding-left: 36px;
  color: #fff;
  background: linear-gradient(90deg, #78302f 0, #9a3e3d 500px, #b04746 1100px, #ad4544 1600px, #9c3c3c 2100px, #7a2d2d 2500px, #5a1e20 3024px);
}
.apple { width: 36px; height: 36px; fill: #fff; flex: none; margin-right: 36px; margin-top: -2px; }
.menu { display: flex; gap: 42px; font-size: 25px; font-weight: 500; }
.menu-app { font-weight: 700; font-size: 25.6px; }
.status { margin-left: auto; display: flex; align-items: center; color: #fff; }
.status svg { flex: none; display: block; }
.st-dots { width: 36px; height: 24px; margin-right: 36px; }
.st-vol { width: 38px; height: 30px; margin-right: 35px; }
.st-bat { width: 50px; height: 28px; margin-right: 39px; }
.st-wifi { width: 36px; height: 28px; margin-right: 38px; }
.st-search { width: 28px; height: 30px; margin-right: 39px; }
.st-ctrl { width: 26px; height: 30px; margin-right: 37px; }
.st-siri { width: 30px; height: 32px; margin-right: 35px; }
.clock { display: flex; gap: 17px; font-size: 26.5px; margin-right: 36px; color: #f6f0f0; }

/* window */
.window {
  position: relative;
  width: 2990px;
  height: 1720px;
  margin: 18px 0 0 17px;
  border-radius: 22px;
  overflow: hidden;
  flex: none;
  display: flex;
  flex-direction: column;
  background: #383836;
  box-shadow: inset 0 2px 0 #6c6c6a;
}
.toolbar { position: relative; height: 104px; flex: none; display: flex; align-items: center; }
.toolbar > svg { flex: none; display: block; }
.lights { display: flex; gap: 16px; margin-left: 39px; }
.light { width: 24px; height: 24px; border-radius: 50%; display: block; }
.red { background: #ee6a5f; }
.yellow { background: #f5bf4f; }
.green { background: #61c454; }
.tb-side { width: 38px; height: 30px; margin-left: 52px; }
.tb-sep { width: 2px; height: 36px; background: #565654; margin-left: 14px; }
.tb-chev { width: 14px; height: 10px; margin-left: 12px; }
.tb-back { width: 18px; height: 30px; margin-left: 52px; }
.tb-fwd { width: 18px; height: 30px; margin-left: 53px; }
.urlbar {
  width: 1212px;
  height: 56px;
  margin-left: 473px;
  border: 3px solid #50504e;
  border-radius: 18px;
  display: flex;
  align-items: center;
  padding-left: 14px;
  flex: none;
}
.urlbar svg { flex: none; display: block; }
.url-reader { width: 24px; height: 28px; }
.url-text { margin-left: 79px; font-size: 25.6px; color: #f0f0ee; white-space: nowrap; width: 1002px; font-weight: 500; }
.url-vol { width: 30px; height: 32px; margin-left: 7px; }
.url-reload { width: 24px; height: 30px; margin-left: 17px; }
.tb-share { width: 30px; height: 40px; margin-left: 670px; }
.tb-plus { width: 30px; height: 30px; margin-left: 44px; }
.tb-tabs { width: 36px; height: 36px; margin-left: 42px; }

.tabbar {
  height: 57px;
  flex: none;
  display: grid;
  grid-template-columns: 996px 997px 997px;
  background: #1e1e1e;
  box-shadow: inset 0 2px 0 #0b0b0b, inset 0 -2px 0 #0b0b0b;
}
.tab {
  position: relative;
  display: flex;
  align-items: center;
  justify-content: center;
  gap: 11px;
  font-size: 22.1px;
  color: #8e8e8c;
}
.tab-first { padding-left: 8px; }
.tab-last { padding-left: 3px; }
.tab-active { background: #383836; color: #f2f2f0; font-weight: 500; }
.fav { width: 20px; height: 28px; }
.fav-bs { width: 32px; height: 30px; }
.fav-txt { font-family: "Liberation Serif", serif; font-size: 12px; text-anchor: middle; fill: #666; }
.fav-yt { width: 30px; height: 24px; }
.tab-vol { position: absolute; right: 8px; top: 14px; width: 30px; height: 30px; }

/* page */
.page { flex: 1; display: flex; min-height: 0; background: #fff; }

.sidebar {
  width: 511px;
  flex: none;
  display: flex;
  flex-direction: column;
  background: #111827;
  border-radius: 0 0 0 22px;
}
.brand {
  height: 192px;
  flex: none;
  display: flex;
  align-items: center;
  padding-left: 64px;
  border-bottom: 2px solid #374151;
}
.brand-mark {
  display: flex;
  align-items: center;
  font-family: "Liberation Serif", serif;
  font-weight: 700;
  font-size: 56px;
  color: #fff;
}
.brand-mark i { display: block; width: 4px; height: 64px; background: #fff; margin: 0 13px 0 14px; }
.brand-name { margin-left: 25px; font-size: 24px; line-height: 32px; letter-spacing: 1.2px; color: #f3f4f6; font-weight: 400; }
.brand-chev { width: 24px; height: 24px; margin-left: auto; margin-right: 58px; fill: none; stroke: #d1d5db; stroke-width: 2.500; stroke-linecap: round; stroke-linejoin: round; }

.nav { padding: 33px 32px 0 31px; display: flex; flex-direction: column; gap: 16px; }
.nav-item {
  display: flex;
  align-items: center;
  gap: 21px;
  min-height: 96px;
  padding: 24px 32px;
  border-radius: 16px;
  font-size: 30.4px;
  line-height: 48px;
  color: #d1d5db;
}
.active { background: #1f2937; color: #fff; }
.ico, .ico-lang, .ico-out, .stat-ico { fill: none; stroke: currentColor; stroke-linecap: round; stroke-linejoin: round; flex: none; }
.ico { width: 44px; height: 44px; stroke-width: 2.100; }

.side-foot { margin-top: auto; border-top: 2px solid #374151; padding-bottom: 24px; }
.user { display: flex; align-items: center; gap: 25px; padding: 36px 31px 0; }
.avatar { width: 64px; height: 64px; border-radius: 50%; background: #4b5563; color: #fff; display: flex; align-items: center; justify-content: center; font-size: 28px; font-weight: 500; flex: none; }
.user-name { font-size: 27.3px; line-height: 36px; font-weight: 500; color: #fff; }
.user-role { font-size: 23.5px; line-height: 32px; color: #9ca3af; }
.lang { display: flex; align-items: center; gap: 16px; height: 56px; margin-top: 42px; padding-left: 55px; color: #d1d5db; font-size: 28px; }
.ico-lang { width: 32px; height: 32px; stroke-width: 2; }
.logout { display: flex; align-items: center; gap: 32px; height: 96px; margin-top: 31px; padding-left: 61px; color: #d1d5db; font-size: 27.5px; }
.ico-out { width: 35px; height: 35px; stroke-width: 2; }

/* main */
.main {
  flex: 1;
  min-width: 0;
  padding: 50px 48px 0 49px;
  background: linear-gradient(#fff calc(100% - 50px), #ececec);
}
.title { margin: 0; font-size: 45.8px; line-height: 64px; font-weight: 700; color: #111827; }
.live { display: flex; align-items: center; gap: 16px; margin-top: 13px; font-size: 23.9px; line-height: 32px; color: #9ca3af; }
.live-dot { width: 16px; height: 16px; border-radius: 50%; background: #bbf0c9; display: block; }

.stats { display: grid; grid-template-columns: repeat(3, 1fr); gap: 48px; margin-top: 65px; }
.stat {
  height: 210px;
  border-radius: 16px;
  border: 2px solid #e5e5e5;
  padding: 0 48px;
  display: flex;
  align-items: center;
  justify-content: space-between;
  color: #fff;
  box-shadow: 0 2px 4px rgba(0,0,0,.08);
}
.stat-purple { background: linear-gradient(135deg, #6668e8, #9090ee); }
.stat-blue { background: linear-gradient(135deg, #4f83ef, #7aa3f4); }
.stat-red { background: linear-gradient(100deg, #df5650, #c83a30); }
.stat-label { font-size: 27.5px; line-height: 40px; opacity: .92; margin-top: -6px; }
.stat-value { font-size: 48.6px; line-height: 64px; font-weight: 700; }
.stat-value-big { font-size: 60px; line-height: 72px; margin-bottom: -8px; }
.stat-ico { width: 48px; height: 48px; stroke-width: 2; opacity: .8; }
.stat-blue .stat-ico { margin-top: -4px; }
.stat-red .stat-ico { margin-top: -2px; }

/* panel */
.panel { margin-top: 66px; height: 656px; border: 2px solid #e5e7eb; border-radius: 16px; box-shadow: 0 2px 3px rgba(0,0,0,.05); }
.tablist { display: flex; height: 80px; padding-top: 5px; border-bottom: 2px solid #e5e7eb; align-items: flex-start; }
.tl-item { height: 68px; padding: 0 24px; display: flex; align-items: center; font-size: 27.5px; font-weight: 500; color: #6b6560; border-bottom: 4px solid transparent; }
.tl-active { background: #eff6ff; color: #1f2937; border-bottom-color: #4f83ef; padding: 0 24px; width: 171px; }
.panel-body { padding: 71px 48px 0; }
.section-title { margin: 0; font-size: 34.3px; line-height: 44px; font-weight: 600; color: #111827; }
.filters { display: flex; gap: 34px; margin-top: 38px; }
.search {
  width: 638px;
  height: 79px;
  border: 2px solid #e5e7eb;
  border-radius: 12px;
  padding: 0 24px;
  font: 400 27px Inter, sans-serif;
  color: #111827;
  background: #fff;
  outline: none;
}
.search::placeholder { color: #6b6560; opacity: 1; }
.select {
  width: 383px;
  height: 79px;
  border: 2px solid #e5e7eb;
  border-radius: 12px;
  padding: 0 29px 0 24px;
  display: flex;
  align-items: center;
  justify-content: space-between;
  font-size: 27px;
  color: #111827;
}
.select svg { width: 22px; height: 22px; fill: none; stroke: #6b7280; stroke-width: 2; stroke-linecap: round; stroke-linejoin: round; }

.jcard {
  width: 738px;
  height: 243px;
  margin-top: 49px;
  border: 2px solid #e5e7eb;
  border-left: 8px solid #5cc46a;
  border-radius: 16px;
  padding: 36px 32px 0 32px;
  box-shadow: 0 2px 4px rgba(0,0,0,.1);
}
.jcard-head { display: flex; align-items: center; justify-content: space-between; margin-bottom: 28px; }
.jcard-head h3 { margin: 0; font-size: 34.4px; line-height: 48px; font-weight: 600; color: #111827; }
.badge { height: 48px; padding: 0 16px; border-radius: 24px; background: #e3f9e9; color: #2e7d42; font-size: 24px; display: flex; align-items: center; }
.jrow { display: flex; justify-content: space-between; font-size: 27px; line-height: 40px; margin-bottom: 16px; }
.jkey { color: #6b7280; }
.jval { color: #111827; font-size: 28.5px; }
.jneg { color: #e5443e; font-size: 28px; }

/* dock */
.dock {
  width: 2855px;
  height: 122px;
  margin: 19px 0 0 84px;
  padding-left: 17px;
  flex: none;
  display: flex;
  align-items: flex-start;
  gap: 26px;
  background: #241315;
  border: 2px solid #4a3a3c;
  border-radius: 36px;
}
.app { position: relative; width: 76px; height: 76px; margin-top: 16px; flex: none; }
.app svg { display: block; width: 76px; height: 76px; overflow: visible; }
.app .app-wide { width: 88px; height: 84px; margin: -4px 0 0 -6px; }
.app .app-tall { height: 80px; }
.app-trash { width: 67px; }
.app-trash svg { width: 68px; height: 86px; margin-top: -7px; }
.run::after { content: ""; position: absolute; left: 35px; top: 87px; width: 6px; height: 6px; border-radius: 50%; background: #a69a9a; }
.badge-dock { position: absolute; right: -13px; top: -9px; width: 36px; height: 36px; border-radius: 50%; background: #e04a38; color: #fff; font-size: 22px; font-weight: 400; display: flex; align-items: center; justify-content: center; }
.dock-sep { display: block; width: 2px; height: 90px; background: #5a4a4c; flex: none; margin-top: 13px; }
.dock-sep-a { margin-left: 8px; margin-right: 8px; }
.dock-sep-b { margin-left: 11px; margin-right: 12px; }
.cal-m { font-size: 14px; font-weight: 500; text-anchor: middle; fill: #fff; }
.cal-d { font-size: 42px; font-weight: 300; text-anchor: middle; fill: #222; }
.tv-t { font-size: 32px; font-weight: 500; text-anchor: middle; fill: #fff; font-family: Inter, sans-serif; }
.cad-a { font-size: 36px; font-weight: 700; text-anchor: middle; fill: #fff; }
.cad-t { font-size: 13px; font-weight: 700; text-anchor: middle; fill: #fff; }
```
